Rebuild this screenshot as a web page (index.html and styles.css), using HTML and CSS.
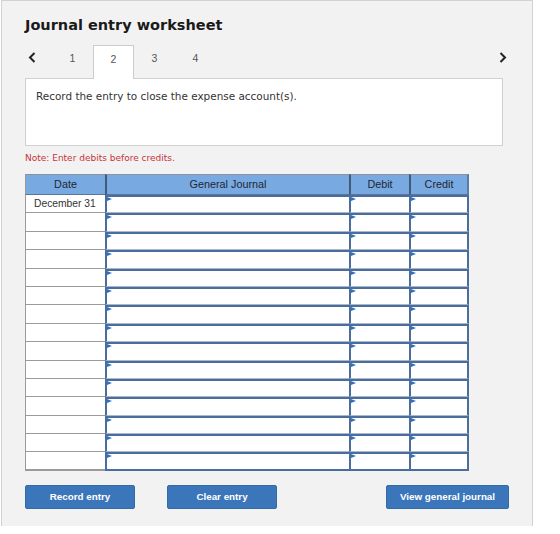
FILE: index.html
```html
<!DOCTYPE html>
<html lang="en">
<head>
    <meta charset="UTF-8">
    <title>Journal entry worksheet</title>
    <link rel="stylesheet" href="styles.css">
</head>
<body>
    <div class="panel">
        <h1 class="title">Journal entry worksheet</h1>

        <div class="tabs">
            <span class="arrow prev">
                <svg width="8" height="11" viewBox="0 0 8 11"><path d="M6.5 1 L2 5.5 L6.5 10" fill="none" stroke="#222" stroke-width="2"/></svg>
            </span>
            <span class="tab">1</span>
            <span class="tab active">2</span>
            <span class="tab">3</span>
            <span class="tab">4</span>
            <span class="arrow next">
                <svg width="8" height="11" viewBox="0 0 8 11"><path d="M1.5 1 L6 5.5 L1.5 10" fill="none" stroke="#222" stroke-width="2"/></svg>
            </span>
        </div>

        <div class="question">Record the entry to close the expense account(s).</div>
        <p class="note">Note: Enter debits before credits.</p>

        <div class="journal">
            <div class="head first">Date</div>
            <div class="head">General Journal</div>
            <div class="head">Debit</div>
            <div class="head last">Credit</div>

            <div class="date">December 31</div><div class="inp"></div><div class="inp"></div><div class="inp last"></div>
            <div class="date"></div><div class="inp"></div><div class="inp"></div><div class="inp last"></div>
            <div class="date"></div><div class="inp"></div><div class="inp"></div><div class="inp last"></div>
            <div class="date"></div><div class="inp"></div><div class="inp"></div><div class="inp last"></div>
            <div class="date"></div><div class="inp"></div><div class="inp"></div><div class="inp last"></div>
            <div class="date"></div><div class="inp"></div><div class="inp"></div><div class="inp last"></div>
            <div class="date"></div><div class="inp"></div><div class="inp"></div><div class="inp last"></div>
            <div class="date"></div><div class="inp"></div><div class="inp"></div><div class="inp last"></div>
            <div class="date"></div><div class="inp"></div><div class="inp"></div><div class="inp last"></div>
            <div class="date"></div><div class="inp"></div><div class="inp"></div><div class="inp last"></div>
            <div class="date"></div><div class="inp"></div><div class="inp"></div><div class="inp last"></div>
            <div class="date"></div><div class="inp"></div><div class="inp"></div><div class="inp last"></div>
            <div class="date"></div><div class="inp"></div><div class="inp"></div><div class="inp last"></div>
            <div class="date"></div><div class="inp"></div><div class="inp"></div><div class="inp last"></div>
            <div class="date bottom"></div><div class="inp bottom"></div><div class="inp bottom"></div><div class="inp last bottom"></div>
        </div>

        <div class="actions">
            <button class="btn">Record entry</button>
            <button class="btn clear">Clear entry</button>
            <button class="btn view">View general journal</button>
        </div>
    </div>
</body>
</html>
```

FILE: styles.css
```css
body {
    margin: 0;
    background: #fff;
    font-family: 'DejaVu Sans', Verdana, sans-serif;
    color: #333;
}
.panel {
    box-sizing: border-box;
    width: 532px;
    height: 526px;
    margin-left: 1px;
    padding: 14px 23px 0 23px;
    background: #f2f2f2;
    border: 1px solid #d2d2d2;
    border-bottom: none;
}
.title {
    margin: 0;
    font-size: 14.5px;
    line-height: 20px;
    font-weight: bold;
    color: #1a1a1a;
}

/* tab strip */
.tabs {
    display: flex;
    align-items: flex-end;
    margin-top: 10px;
    height: 33px;
}
.arrow {
    display: flex;
    align-self: stretch;
    align-items: flex-start;
    padding-top: 7px;
}
.arrow.prev {
    width: 24px;
    padding-left: 3px;
}
.arrow.next {
    margin-left: auto;
    margin-right: 2px;
}
.tab {
    box-sizing: border-box;
    width: 41px;
    height: 33px;
    padding-top: 7px;
    text-align: center;
    font-family: 'Liberation Sans', Arial, sans-serif;
    font-size: 10.5px;
    line-height: 13px;
    color: #555;
}
.tab.active {
    background: #fff;
    border: 1px solid #ccc;
    border-bottom: none;
    height: 34px;
    margin-bottom: -1px;
    position: relative;
    z-index: 1;
}

.question {
    box-sizing: border-box;
    width: 478px;
    height: 68px;
    padding: 10px 10px 0;
    background: #fff;
    border: 1px solid #d0d0d0;
    font-size: 10.45px;
    line-height: 14px;
    color: #333;
}
.note {
    margin: 6px 0 0;
    font-size: 9px;
    line-height: 12px;
    color: #c8323a;
}

/* journal grid */
.journal {
    display: grid;
    grid-template-columns: 80px 244px 60px 60px;
    grid-template-rows: 21px repeat(15, 18.4px);
    width: 444px;
    margin-top: 10px;
    font-family: 'Liberation Sans', Arial, sans-serif;
}
.head {
    box-sizing: border-box;
    background: #79a9e1;
    border-top: 1px solid #8b949e;
    border-bottom: 1px solid #5a7597;
    border-left: 2px solid #435b7a;
    text-align: center;
    font-size: 10.8px;
    line-height: 19px;
    color: #1e2733;
}
.head.first {
    border-left: 1px solid #999;
}
.head.last {
    border-right: 2px solid #5b7baa;
}
.date {
    box-sizing: border-box;
    background: #fff;
    border-left: 1px solid #9a9a9a;
    border-bottom: 1px solid #9a9a9a;
    padding-left: 8px;
    font-size: 10.3px;
    line-height: 17px;
    color: #333;
}
.date.bottom {
    border-bottom: 2px solid #9a9a9a;
}
.inp {
    box-sizing: border-box;
    position: relative;
    background: #fff;
    border-left: 2px solid #4a6d9e;
    border-top: 2px solid #4a6d9e;
    border-bottom: 1px solid #a9b8cb;
}
.inp.last {
    border-right: 2px solid #4a6d9e;
}
.inp.bottom {
    border-bottom: 2px solid #4a6d9e;
}
.inp::before {
    content: '';
    position: absolute;
    top: 0;
    left: 0;
    border-left: 5px solid #2e70c2;
    border-top: 2.5px solid transparent;
    border-bottom: 2.5px solid transparent;
}

.actions {
    display: flex;
    margin-top: 14px;
}
.btn {
    box-sizing: border-box;
    width: 110px;
    height: 24px;
    padding: 0;
    background: #3b76ba;
    border: 1px solid #346aa8;
    border-radius: 2px;
    color: #fff;
    font-family: 'Liberation Sans', Arial, sans-serif;
    font-size: 9.8px;
    font-weight: bold;
}
.btn.clear {
    margin-left: 32px;
}
.btn.view {
    width: 123px;
    margin-left: auto;
}
```
